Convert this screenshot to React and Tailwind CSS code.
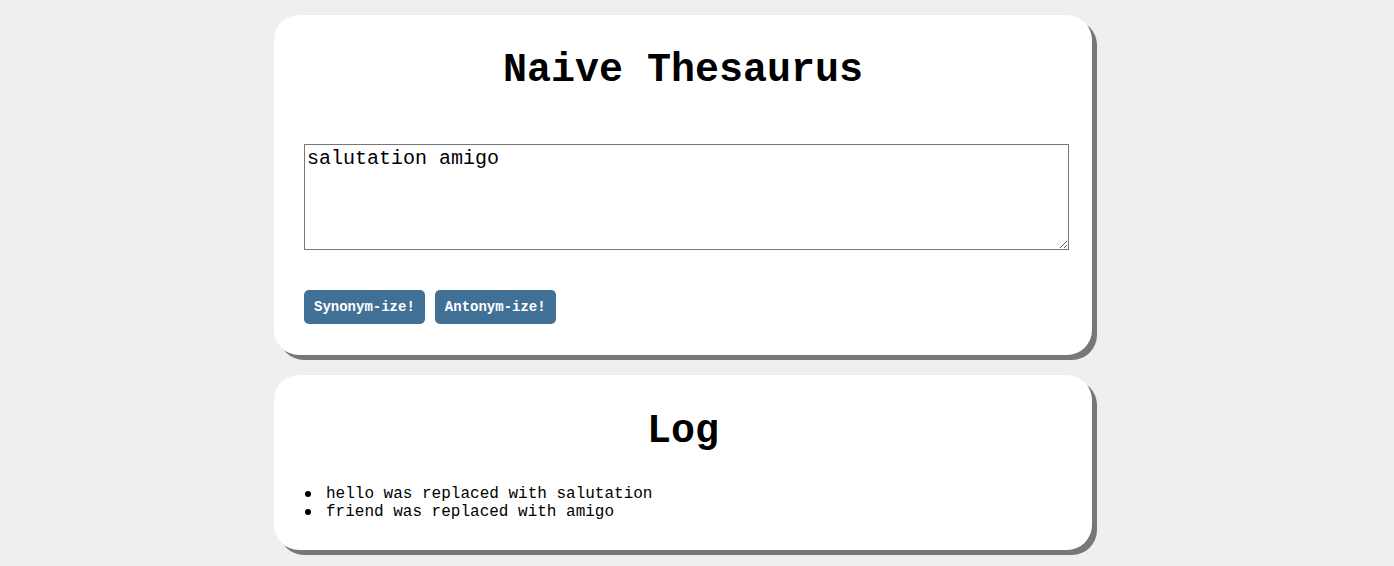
import { useState } from "react";

const mono = { fontFamily: '"Liberation Mono", "Courier New", monospace' };

const Card = ({ className, children }) => (
  <div
    className={`ml-[274px] w-[818px] bg-white rounded-[25px] shadow-[5px_5px_0_#777] px-[30px] ${className}`}
  >
    {children}
  </div>
);

export default function App() {
  const [text, setText] = useState("salutation amigo");
  const log = [
    "hello was replaced with salutation",
    "friend was replaced with amigo",
  ];

  return (
    <div className="min-h-[566px] bg-[#efefef] pt-[15px] pb-[16px] text-black" style={mono}>
      <Card className="pt-[33px] pb-[31px]">
        <h1 className="text-[40px] leading-[45px] font-bold text-center">
          Naive Thesaurus
        </h1>
        <textarea
          value={text}
          onChange={(e) => setText(e.target.value)}
          className="block mt-[51px] w-[765px] h-[106px] border border-[#767676] p-[2px] text-[20px] leading-[23px] outline-none"
          style={mono}
        />
        <div className="flex gap-[10px] mt-[40px]">
          <button className="h-[34px] px-[10px] rounded-[5px] bg-[#417097] text-white text-[14px] font-bold" style={mono}>
            Synonym-ize!
          </button>
          <button className="h-[34px] px-[10px] rounded-[5px] bg-[#417097] text-white text-[14px] font-bold" style={mono}>
            Antonym-ize!
          </button>
        </div>
      </Card>

      <Card className="mt-[20px] pt-[34px] pb-[29px]">
        <h2 className="text-[40px] leading-[45px] font-bold text-center">Log</h2>
        <ul className="mt-[31px] text-[16px] leading-[18px]">
          {log.map((entry, i) => (
            <li key={i} className="flex items-center">
              <span className="ml-[1px] mr-[15px] w-[6px] h-[6px] rounded-full bg-black" />
              {entry}
            </li>
          ))}
        </ul>
      </Card>
    </div>
  );
}
